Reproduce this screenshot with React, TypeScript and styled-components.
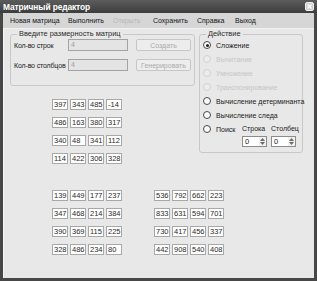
import React from "react";
import styled, { createGlobalStyle } from "styled-components";

const GlobalStyle = createGlobalStyle`
  html, body {
    margin: 0;
    padding: 0;
    background: #3f3f3f;
  }
  body {
    font-family: "Liberation Sans", Arial, sans-serif;
  }
  * {
    box-sizing: border-box;
  }
`;

const Window = styled.div`
  width: 317px;
  height: 281px;
  display: flex;
  flex-direction: column;
  background: #474747;
  padding: 0 3px 3px;
`;

const TitleBar = styled.div`
  height: 13px;
  margin: 0 -3px;
  padding: 0 3px;
  display: flex;
  align-items: center;
  justify-content: space-between;
  background: linear-gradient(#5c5c5c, #3d3d3d);
  color: #fff;
  font-weight: bold;
  font-size: 8.4px;
  letter-spacing: -0.1px;
`;

const CloseButton = styled.div`
  width: 9px;
  height: 9px;
  border-radius: 2px;
  border: 1px solid #eee;
  background: #cfcfcf;
  display: flex;
  align-items: center;
  justify-content: center;
`;

const MenuBar = styled.div`
  height: 15px;
  display: flex;
  align-items: center;
  padding-left: 7px;
  background: #d6d6d6;
  font-size: 7px;
`;

const MenuItem = styled.span<{ $disabled?: boolean; $w?: number }>`
  width: ${(p) => (p.$w ? `${p.$w}px` : "auto")};
  color: ${(p) => (p.$disabled ? "#b8b8b8" : "#151515")};
  white-space: nowrap;
`;

const Client = styled.div`
  flex: 1;
  background: #e8e8e8;
  border-top: 1px solid #f2f2f2;
  border-left: 1px solid #f4f4f4;
  padding: 0 6px;
  font-size: 7px;
  color: #1a1a1a;
`;

const TopSection = styled.div`
  display: flex;
  gap: 4px;
  align-items: flex-start;
`;

const LeftColumn = styled.div`
  display: flex;
  flex-direction: column;
`;

const Group = styled.fieldset<{ $width: number }>`
  width: ${(p) => p.$width}px;
  margin: 0;
  padding: 0 3px 4px;
  border: 1px solid #c8c8c8;
  border-radius: 3px;
  min-width: 0;
`;

const Legend = styled.legend`
  font-size: 7.4px;
  line-height: 10px;
  padding: 0 2px;
  margin-left: 3px;
  color: #2a2a2a;
`;

const SizeRows = styled.div`
  display: flex;
  flex-direction: column;
  gap: 8px;
  padding-bottom: 10px;
`;

const SizeRow = styled.div`
  display: flex;
  align-items: center;
`;

const FieldLabel = styled.span`
  width: 54px;
  white-space: nowrap;
  letter-spacing: -0.15px;
`;

const TextBox = styled.div`
  width: 60px;
  height: 12px;
  border: 1px solid #a3a3a3;
  background: #e4e4e4;
  color: #a0a0a0;
  padding-left: 2px;
  line-height: 10px;
`;

const DisabledButton = styled.div`
  width: 55px;
  height: 12px;
  margin-left: 8px;
  border: 1px solid #c6c6c6;
  border-radius: 2px;
  background: #ededed;
  color: #aaaaaa;
  display: flex;
  align-items: center;
  justify-content: center;
`;

const RadioList = styled.div`
  display: flex;
  flex-direction: column;
  gap: 2px;
  padding-bottom: 1px;
`;

const RadioRow = styled.div<{ $disabled?: boolean }>`
  height: 12px;
  display: flex;
  align-items: center;
  gap: 5px;
  white-space: nowrap;
  color: ${(p) => (p.$disabled ? "#c6c6c6" : "#1a1a1a")};
`;

const Circle = styled.span<{ $disabled?: boolean; $checked?: boolean }>`
  width: 8px;
  height: 8px;
  flex: none;
  border-radius: 50%;
  border: 1px solid ${(p) => (p.$disabled ? "#d2d2d2" : "#4a4a4a")};
  background: ${(p) => (p.$disabled ? "#ececec" : "#fafafa")};
  display: flex;
  align-items: center;
  justify-content: center;
  &::after {
    content: "";
    width: 3px;
    height: 3px;
    border-radius: 50%;
    background: #222;
    display: ${(p) => (p.$checked ? "block" : "none")};
  }
`;

const SearchRow = styled.div`
  display: flex;
  align-items: flex-start;
`;

const SearchRadio = styled(RadioRow)`
  width: 39px;
`;

const SpinGroup = styled.div`
  display: flex;
  gap: 4px;
`;

const SpinColumn = styled.div`
  width: 25px;
  display: flex;
  flex-direction: column;
`;

const SpinCaption = styled.span`
  height: 13px;
  line-height: 12px;
  white-space: nowrap;
`;

const SpinBox = styled.div`
  height: 11px;
  border: 1px solid #8c8c8c;
  background: #fff;
  display: flex;
  justify-content: space-between;
  line-height: 9px;
  padding-left: 2px;
  font-size: 7.5px;
`;

const SpinArrows = styled.div`
  width: 7px;
  display: flex;
  flex-direction: column;
  align-items: center;
  justify-content: center;
  gap: 1px;
  background: #f1f1f1;
`;

const MatrixGrid = styled.div<{ $ml?: number; $mt?: number }>`
  display: grid;
  grid-template-columns: repeat(4, 16px);
  grid-auto-rows: 11px;
  column-gap: 2px;
  row-gap: 7px;
  margin-left: ${(p) => p.$ml ?? 0}px;
  margin-top: ${(p) => p.$mt ?? 0}px;
`;

const Cell = styled.div`
  border: 1px solid #a8a8a8;
  background: #fff;
  font-size: 7.5px;
  line-height: 9px;
  padding-left: 1px;
  color: #2a2a2a;
  white-space: nowrap;
  overflow: hidden;
`;

const BottomSection = styled.div`
  display: flex;
  gap: 32px;
  padding-left: 42px;
  margin-top: 26px;
`;

const m1 = [
  [397, 343, 485, -14],
  [486, 163, 380, 317],
  [340, 48, 341, 112],
  [114, 422, 306, 328],
];
const m2 = [
  [139, 449, 177, 237],
  [347, 468, 214, 384],
  [390, 369, 115, 225],
  [328, 486, 234, 80],
];
const m3 = [
  [536, 792, 662, 223],
  [833, 631, 594, 701],
  [730, 417, 456, 337],
  [442, 908, 540, 408],
];

const Matrix = ({ data, ml, mt }: { data: number[][]; ml?: number; mt?: number }) => (
  <MatrixGrid $ml={ml} $mt={mt}>
    {data.flat().map((v, i) => (
      <Cell key={i}>{v}</Cell>
    ))}
  </MatrixGrid>
);

const Spin = () => (
  <SpinBox>
    0
    <SpinArrows>
      <svg width="5" height="3" viewBox="0 0 5 3">
        <path d="M0 3 L2.5 0 L5 3 Z" fill="#6a6a6a" />
      </svg>
      <svg width="5" height="3" viewBox="0 0 5 3">
        <path d="M0 0 L2.5 3 L5 0 Z" fill="#6a6a6a" />
      </svg>
    </SpinArrows>
  </SpinBox>
);

const actions = [
  { label: "Сложение", checked: true },
  { label: "Вычитание", disabled: true },
  { label: "Умножение", disabled: true },
  { label: "Транспонирование", disabled: true },
  { label: "Вычисление детерминанта" },
  { label: "Вычисление следа" },
];

const App = () => {
  return (
    <>
      <GlobalStyle />
      <Window>
        <TitleBar>
          <span>Матричный редактор</span>
          <CloseButton>
            <svg width="5" height="5" viewBox="0 0 5 5">
              <path d="M0.5 0.5 L4.5 4.5 M4.5 0.5 L0.5 4.5" stroke="#fff" strokeWidth="1.3" />
            </svg>
          </CloseButton>
        </TitleBar>
        <MenuBar>
          <MenuItem $w={58}>Новая матрица</MenuItem>
          <MenuItem $w={45}>Выполнить</MenuItem>
          <MenuItem $w={40} $disabled>
            Открыть
          </MenuItem>
          <MenuItem $w={44}>Сохранить</MenuItem>
          <MenuItem $w={38}>Справка</MenuItem>
          <MenuItem>Выход</MenuItem>
        </MenuBar>
        <Client>
          <TopSection>
            <LeftColumn>
              <Group $width={185}>
                <Legend>Введите размерность матриц</Legend>
                <SizeRows>
                  <SizeRow>
                    <FieldLabel>Кол-во строк</FieldLabel>
                    <TextBox>4</TextBox>
                    <DisabledButton>Создать</DisabledButton>
                  </SizeRow>
                  <SizeRow>
                    <FieldLabel>Кол-во столбцов</FieldLabel>
                    <TextBox>4</TextBox>
                    <DisabledButton>Генерировать</DisabledButton>
                  </SizeRow>
                </SizeRows>
              </Group>
              <Matrix data={m1} ml={42} mt={13} />
            </LeftColumn>
            <Group $width={104}>
              <Legend>Действие</Legend>
              <RadioList>
                {actions.map((a) => (
                  <RadioRow key={a.label} $disabled={a.disabled}>
                    <Circle $disabled={a.disabled} $checked={a.checked} />
                    {a.label}
                  </RadioRow>
                ))}
                <SearchRow>
                  <SearchRadio>
                    <Circle />
                    Поиск
                  </SearchRadio>
                  <SpinGroup>
                    <SpinColumn>
                      <SpinCaption>Строка</SpinCaption>
                      <Spin />
                    </SpinColumn>
                    <SpinColumn>
                      <SpinCaption>Столбец</SpinCaption>
                      <Spin />
                    </SpinColumn>
                  </SpinGroup>
                </SearchRow>
              </RadioList>
            </Group>
          </TopSection>
          <BottomSection>
            <Matrix data={m2} />
            <Matrix data={m3} />
          </BottomSection>
        </Client>
      </Window>
    </>
  );
};

export default App;
